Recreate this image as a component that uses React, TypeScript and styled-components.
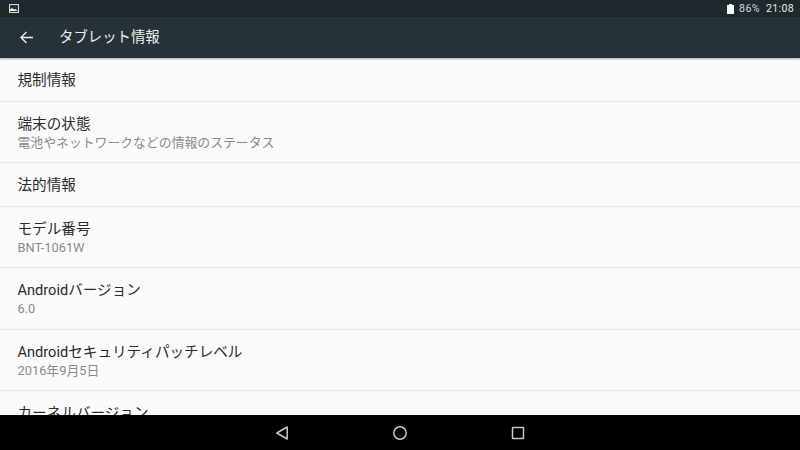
import React from "react";
import styled, { createGlobalStyle } from "styled-components";

const GlobalStyle = createGlobalStyle`
  html, body {
    margin: 0;
    padding: 0;
    width: 800px;
    height: 450px;
    overflow: hidden;
    font-family: Roboto, "Noto Sans CJK JP", sans-serif;
  }
  * {
    box-sizing: border-box;
  }
`;

const Screen = styled.div`
  width: 800px;
  height: 450px;
  display: flex;
  flex-direction: column;
  background: #fafafa;
`;

const StatusBar = styled.div`
  height: 17px;
  flex: none;
  background: #1f282d;
  display: flex;
  align-items: center;
  justify-content: space-between;
  padding: 0 6px 0 9px;
  color: #e4e7e8;
  font-size: 10.6px;
`;

const StatusRight = styled.div`
  display: flex;
  align-items: center;
`;

const Percent = styled.span`
  margin-left: 5px;
  letter-spacing: 0.5px;
  color: #d4d8da;
`;

const Clock = styled.span`
  margin-left: 6px;
  letter-spacing: 0.3px;
`;

const AppBar = styled.header`
  height: 41px;
  flex: none;
  background: #263238;
  display: flex;
  align-items: center;
  padding-left: 19px;
  color: #eceff0;
  box-shadow: 0 1px 2px rgba(0, 0, 0, 0.35);
  position: relative;
  z-index: 1;
`;

const AppTitle = styled.h1`
  margin: 0 0 0 25px;
  font-size: 14.4px;
  font-weight: 400;
  line-height: 20px;
`;

const List = styled.main`
  flex: 1;
  min-height: 0;
  overflow: hidden;
`;

const Row = styled.div<{ $height: number }>`
  height: ${({ $height }) => $height}px;
  padding-left: 17.5px;
  display: flex;
  flex-direction: column;
  justify-content: center;
  border-bottom: 1px solid #e6e6e6;
`;

const RowTitle = styled.div`
  font-size: 14.6px;
  line-height: 20px;
  color: #2b2b2b;
`;

const RowSub = styled.div`
  font-size: 12.85px;
  line-height: 17px;
  color: #8a8a8a;
`;

const NavBar = styled.nav`
  height: 35px;
  flex: none;
  background: #000;
  display: flex;
  align-items: center;
  justify-content: center;
  gap: 100px;
`;

const NavIcon = styled.svg`
  width: 18px;
  height: 18px;
  display: block;
  fill: none;
  stroke: #c8c8c8;
  stroke-width: 1.5;
`;

const rows = [
  { title: "規制情報", height: 44 },
  { title: "端末の状態", sub: "電池やネットワークなどの情報のステータス", height: 61 },
  { title: "法的情報", height: 44 },
  { title: "モデル番号", sub: "BNT-1061W", height: 61 },
  { title: "Androidバージョン", sub: "6.0", height: 62 },
  { title: "Androidセキュリティパッチレベル", sub: "2016年9月5日", height: 61 },
  { title: "カーネルバージョン", height: 44 },
];

const App = () => (
  <>
    <GlobalStyle />
    <Screen>
      <StatusBar>
        <svg width="10" height="9" viewBox="0 0 10 9">
          <rect x="0.5" y="0.5" width="9" height="8" fill="#2a3338" stroke="#d8dcde" />
          <path d="M1 7V5.5L3 4l2 1.5L6 5l3 2z" fill="#eef0f1" />
        </svg>
        <StatusRight>
          <svg width="7" height="10" viewBox="0 0 7 10">
            <path d="M2 0h3v1h2v9H0V1h2z" fill="#f4f5f5" />
          </svg>
          <Percent>86%</Percent>
          <Clock>21:08</Clock>
        </StatusRight>
      </StatusBar>
      <AppBar>
        <svg width="15" height="15" viewBox="0 0 15 15" fill="none" stroke="#eceff0" strokeWidth="1.4">
          <path d="M14 7.5H2M7.5 2L2 7.5 7.5 13" />
        </svg>
        <AppTitle>タブレット情報</AppTitle>
      </AppBar>
      <List>
        {rows.map((row) => (
          <Row key={row.title} $height={row.height}>
            <RowTitle>{row.title}</RowTitle>
            {row.sub && <RowSub>{row.sub}</RowSub>}
          </Row>
        ))}
      </List>
      <NavBar>
        <NavIcon viewBox="0 0 18 18">
          <path d="M14.2 3v12L3.8 9z" strokeLinejoin="round" />
        </NavIcon>
        <NavIcon viewBox="0 0 18 18">
          <circle cx="9" cy="9" r="6.2" />
        </NavIcon>
        <NavIcon viewBox="0 0 18 18">
          <rect x="3.5" y="3.5" width="11" height="11" rx="0.5" />
        </NavIcon>
      </NavBar>
    </Screen>
  </>
);

export default App;
